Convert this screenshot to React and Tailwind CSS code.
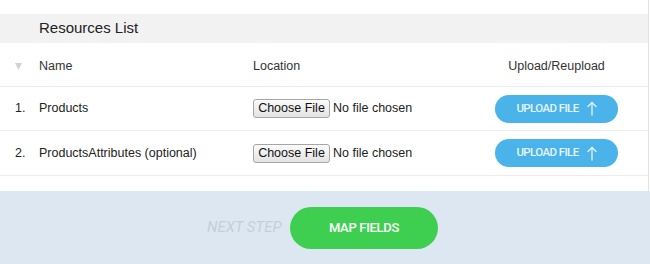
import React from "react";

function ChooseFile() {
  return (
    <div className="flex items-center">
      <div className="h-[19px] w-[77px] flex items-center justify-center rounded-[3px] border border-[#a6a6a6] bg-gradient-to-b from-[#fbfbfb] to-[#e3e3e3] text-[12.5px] text-[#111] leading-none">
        Choose File
      </div>
      <span className="ml-[3px] text-[12.5px] text-[#222]">No file chosen</span>
    </div>
  );
}

function UploadButton() {
  return (
    <div className="h-[28px] w-[123px] rounded-full bg-[#4ab3ea] flex items-center justify-center gap-[8px] text-[#e6f3fc] font-['Roboto',sans-serif] font-medium text-[11.5px] tracking-[-0.6px]">
      <span>UPLOAD FILE</span>
      <svg width="10" height="15" viewBox="0 0 10 15" fill="none" stroke="currentColor" strokeWidth="1.3" strokeLinecap="round" strokeLinejoin="round">
        <path d="M5 14V1.5" />
        <path d="M1 5.5L5 1.5L9 5.5" />
      </svg>
    </div>
  );
}

function Row({ n, name, h }) {
  return (
    <div className={"grid grid-cols-[39px_214px_242px_123px] items-center border-b border-[#ececec] " + h}>
      <span className="pl-[15px] text-[12.5px] text-[#222]">{n}</span>
      <span className="text-[12.5px] text-[#222]">{name}</span>
      <ChooseFile />
      <UploadButton />
    </div>
  );
}

export default function App() {
  return (
    <div className="w-[650px] h-[264px] bg-white font-['Liberation_Sans',Arial,sans-serif] flex flex-col overflow-hidden">
      <div className="w-[649px] border-r border-[#e3e3e3] flex flex-col pt-[14px] h-[191px]">
        <div className="h-[29px] bg-[#f2f2f2] flex items-center pl-[39px] text-[15px] text-[#222]">
          Resources List
        </div>
        <div className="grid grid-cols-[39px_214px_242px_123px] items-center h-[44px] pt-[4px] border-b border-[#ececec] text-[12.5px] text-[#333]">
          <span className="pl-[15px] flex">
            <svg width="7" height="7" viewBox="0 0 7 7">
              <path d="M0 0H7L3.5 7Z" fill="#d3d3d3" />
            </svg>
          </span>
          <span>Name</span>
          <span>Location</span>
          <span className="text-center">Upload/Reupload</span>
        </div>
        <Row n="1." name="Products" h="h-[44px]" />
        <Row n="2." name="ProductsAttributes (optional)" h="h-[45px]" />
      </div>
      <div className="flex-1 bg-[#dce7f1] flex items-center pl-[207px]">
        <span className="w-[83px] font-['Roboto',sans-serif] italic text-[15px] text-[#c6cfd8] whitespace-nowrap">NEXT STEP</span>
        <div className="h-[42px] w-[148px] rounded-full bg-[#3fcf50] flex items-center justify-center text-white font-['Roboto',sans-serif] font-medium text-[13px] tracking-[-0.3px]">
          MAP FIELDS
        </div>
      </div>
    </div>
  );
}
